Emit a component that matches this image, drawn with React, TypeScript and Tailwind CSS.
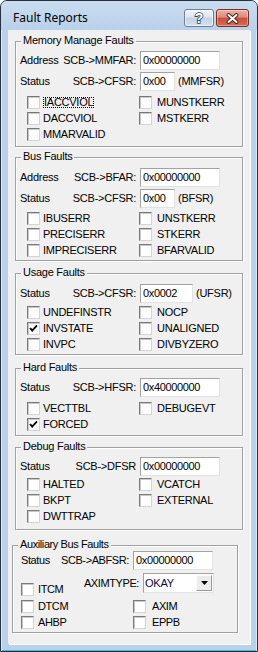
import React from "react";

const font = "font-['Liberation_Sans',Arial,sans-serif]";

type CheckProps = {
  label: string;
  checked?: boolean;
  focus?: boolean;
  gap?: string;
};

const Check = ({ label, checked, focus, gap = "ml-[3px]" }: CheckProps) => (
  <div className="flex items-center h-[16px]">
    <span className="flex items-center justify-center w-[13px] h-[13px] shrink-0 bg-white border border-t-[#7a7a7a] border-l-[#7a7a7a] border-b-[#d4d4d4] border-r-[#d4d4d4] shadow-[inset_1px_1px_0_#c8c8c8]">
      {checked && (
        <svg width="11" height="11" viewBox="0 0 11 11">
          <path d="M2 5 L4.2 7.6 L9 2.4" fill="none" stroke="#000" strokeWidth="1.8" />
        </svg>
      )}
    </span>
    {focus ? (
      <span className={`${gap} h-[11px] leading-[9px] border border-dotted border-black`}>{label}</span>
    ) : (
      <span className={`${gap} leading-[13px]`}>{label}</span>
    )}
  </div>
);

type FieldProps = {
  left: string;
  label: string;
  value: string;
  boxW: string;
  areaW?: string;
  suffix?: string;
  cls?: string;
};

const Field = ({ left, label, value, boxW, areaW = "w-[116px]", suffix, cls = "" }: FieldProps) => (
  <div className={`flex items-center h-[19px] ${cls}`}>
    <div className={`${areaW} flex justify-between leading-[13px]`}>
      <span>{left}</span>
      <span>{label}</span>
    </div>
    <div
      className={`${boxW} h-[19px] ml-[4px] pl-[2px] bg-white border border-t-[#a2a2a2] border-l-[#a2a2a2] border-b-[#e2e2e2] border-r-[#e2e2e2] leading-[17px] tracking-[-0.35px]`}
    >
      {value}
    </div>
    {suffix && <span className="ml-[3px] leading-[13px]">{suffix}</span>}
  </div>
);

type GroupProps = {
  title: string;
  cls: string;
  children: React.ReactNode;
};

const Group = ({ title, cls, children }: GroupProps) => (
  <div className={`relative border border-[#a0a0a0] shadow-[inset_1px_1px_0_#fff,1px_1px_0_#fff] ${cls}`}>
    <span className="absolute left-[5px] -top-[8px] px-[2px] bg-[#f0f0f0] leading-[13px]">{title}</span>
    {children}
  </div>
);

const grid = "grid grid-cols-[112px_auto] pl-[11px]";

export default function App() {
  return (
    <div
      className={`${font} text-[11px] tracking-[-0.25px] text-black w-[258px] h-[652px] flex flex-col bg-[#b9d1ea] border border-[#26323f] rounded-t-[7px] overflow-hidden shadow-[inset_1px_1px_0_#dce8f5,inset_-1px_0_0_#dce8f5,inset_0_-1px_0_#3bb8e6]`}
    >
      {/* title bar */}
      <div className="h-[29px] shrink-0 flex items-center pt-[5px] pl-[12px] pr-[8px] bg-[linear-gradient(#cadcf0,#b9d1ea)] rounded-t-[6px]">
        <span className="font-['Noto_Sans',sans-serif] text-[12px] tracking-normal leading-[16px]">Fault Reports</span>
        <div className="ml-auto flex gap-[2px]">
          <div className="w-[30px] h-[18px] rounded-[3px] border border-[#6f7e92] bg-[linear-gradient(#f0f5fb,#dbe5f2_45%,#c3d3e7_50%,#d2e0f0)] shadow-[inset_0_0_0_1px_rgba(255,255,255,0.6)] flex items-center justify-center">
            <span className="font-['Liberation_Sans',Arial,sans-serif] font-bold text-[14px] leading-none text-white [-webkit-text-stroke:1.6px_#3a4759] [paint-order:stroke_fill]">
              ?
            </span>
          </div>
          <div className="w-[33px] h-[18px] rounded-[3px] border border-[#7a2d22] bg-[linear-gradient(#ebb0a4,#dc8b7a_45%,#c7503f_50%,#d66a57)] shadow-[inset_0_0_0_1px_rgba(255,255,255,0.35)] flex items-center justify-center">
            <svg width="13" height="11" viewBox="0 0 13 11">
              <path d="M2.5 2 L10.5 9 M10.5 2 L2.5 9" stroke="#4a1c14" strokeWidth="3.8" strokeLinecap="round" />
              <path d="M2.5 2 L10.5 9 M10.5 2 L2.5 9" stroke="#fff" strokeWidth="2" strokeLinecap="round" />
            </svg>
          </div>
        </div>
      </div>

      {/* client area */}
      <div className="mx-[7px] h-[614px] shrink-0 flex flex-col pt-[11px] bg-[#f0f0f0] shadow-[1px_1px_0_#fff]">
        <Group title="Memory Manage Faults" cls="mx-[7px] h-[106px]">
          <div className="pt-[9px] pl-[4px]">
            <Field left="Address" label="SCB->MMFAR:" value="0x00000000" boxW="w-[80px]" />
            <Field left="Status" label="SCB->CFSR:" value="0x00" boxW="w-[35px]" suffix="(MMFSR)" cls="mt-[2px]" />
          </div>
          <div className={`${grid} mt-[3px]`}>
            <Check label="IACCVIOL" focus />
            <Check label="MUNSTKERR" gap="ml-[5px]" />
            <Check label="DACCVIOL" />
            <Check label="MSTKERR" gap="ml-[5px]" />
            <Check label="MMARVALID" />
          </div>
        </Group>

        <Group title="Bus Faults" cls="mx-[7px] mt-[10px] h-[104px]">
          <div className="pt-[10px] pl-[4px]">
            <Field left="Address" label="SCB->BFAR:" value="0x00000000" boxW="w-[80px]" />
            <Field left="Status" label="SCB->CFSR:" value="0x00" boxW="w-[35px]" suffix="(BFSR)" cls="mt-[2px]" />
          </div>
          <div className={`${grid} mt-[2px]`}>
            <Check label="IBUSERR" />
            <Check label="UNSTKERR" gap="ml-[5px]" />
            <Check label="PRECISERR" />
            <Check label="STKERR" gap="ml-[5px]" />
            <Check label="IMPRECISERR" />
            <Check label="BFARVALID" gap="ml-[5px]" />
          </div>
        </Group>

        <Group title="Usage Faults" cls="mx-[7px] mt-[12px] h-[82px]">
          <div className="pt-[10px] pl-[4px]">
            <Field left="Status" label="SCB->CFSR:" value="0x0002" boxW="w-[53px]" suffix="(UFSR)" />
          </div>
          <div className={`${grid} mt-[1px]`}>
            <Check label="UNDEFINSTR" />
            <Check label="NOCP" gap="ml-[5px]" />
            <Check label="INVSTATE" checked />
            <Check label="UNALIGNED" gap="ml-[5px]" />
            <Check label="INVPC" />
            <Check label="DIVBYZERO" gap="ml-[5px]" />
          </div>
        </Group>

        <Group title="Hard Faults" cls="mx-[7px] mt-[13px] h-[68px]">
          <div className="pt-[9px] pl-[4px]">
            <Field left="Status" label="SCB->HFSR:" value="0x40000000" boxW="w-[80px]" />
          </div>
          <div className={`${grid} mt-[3px]`}>
            <Check label="VECTTBL" />
            <Check label="DEBUGEVT" gap="ml-[5px]" />
            <Check label="FORCED" checked />
          </div>
        </Group>

        <Group title="Debug Faults" cls="mx-[7px] mt-[11px] h-[83px]">
          <div className="pt-[9px] pl-[4px]">
            <Field left="Status" label="SCB->DFSR" value="0x00000000" boxW="w-[80px]" />
          </div>
          <div className={grid}>
            <Check label="HALTED" />
            <Check label="VCATCH" gap="ml-[5px]" />
            <Check label="BKPT" />
            <Check label="EXTERNAL" gap="ml-[5px]" />
            <Check label="DWTTRAP" />
          </div>
        </Group>

        <Group title="Auxiliary Bus Faults" cls="ml-[4px] mr-[12px] mt-[15px] h-[88px] tracking-[-0.4px]">
          <div className="pt-[5px] pl-[8px]">
            <Field left="Status" label="SCB->ABFSR:" value="0x00000000" boxW="w-[80px]" areaW="w-[108px]" />
            <div className="flex items-start h-[24px] mt-[3px]">
              <div className="w-[60px] mt-[8px]">
                <Check label="ITCM" gap="ml-[4px]" />
              </div>
              <div className="w-[58px] h-[20px] flex items-center justify-end leading-[13px]">AXIMTYPE:</div>
              <div className="ml-[4px] w-[71px] h-[20px] p-[1px] flex bg-white border border-t-[#a2a2a2] border-l-[#a2a2a2] border-b-[#e2e2e2] border-r-[#e2e2e2]">
                <span className="flex-1 leading-[16px] text-[#0a0a4a] tracking-[-0.2px]">OKAY</span>
                <span className="w-[16px] h-full flex items-center justify-center bg-[#ececec] border border-t-[#fafafa] border-l-[#fafafa] border-b-[#9a9a9a] border-r-[#9a9a9a]">
                  <svg width="7" height="4" viewBox="0 0 7 4">
                    <path d="M0 0 H7 L3.5 4 Z" fill="#000" />
                  </svg>
                </span>
              </div>
            </div>
            <div className="grid grid-cols-[112px_auto] mt-[1px]">
              <Check label="DTCM" gap="ml-[4px]" />
              <Check label="AXIM" gap="ml-[6px]" />
              <Check label="AHBP" gap="ml-[4px]" />
              <Check label="EPPB" gap="ml-[6px]" />
            </div>
          </div>
        </Group>
      </div>
    </div>
  );
}
